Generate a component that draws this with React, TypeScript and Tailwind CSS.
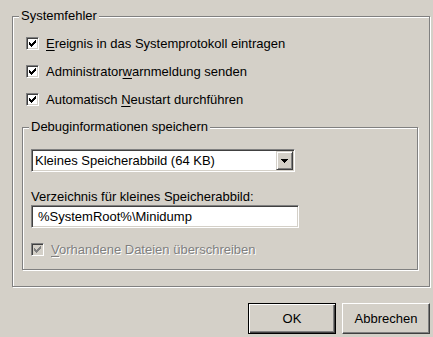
import React from "react"

const CHECK_PIXELS: [number, number][] = [
  [0, 2], [0, 3], [0, 4],
  [1, 3], [1, 4], [1, 5],
  [2, 4], [2, 5], [2, 6],
  [3, 3], [3, 4], [3, 5],
  [4, 2], [4, 3], [4, 4],
  [5, 1], [5, 2], [5, 3],
  [6, 0], [6, 1], [6, 2],
]

function CheckBox({ disabled = false }: { disabled?: boolean }) {
  return (
    <div
      className={`w-[13px] h-[13px] shrink-0 border border-t-[#808080] border-l-[#808080] border-r-white border-b-white shadow-[inset_1px_1px_0_#404040,inset_-1px_-1px_0_#d4d0c8] ${
        disabled ? "bg-[#d4d0c8]" : "bg-white"
      }`}
    >
      <svg width="11" height="11" viewBox="0 0 11 11" shapeRendering="crispEdges">
        {CHECK_PIXELS.map(([x, y]) => (
          <rect key={`${x}-${y}`} x={x + 2} y={y + 2} width="1" height="1" fill={disabled ? "#808080" : "#000"} />
        ))}
      </svg>
    </div>
  )
}

function CheckRow({ children, disabled = false }: { children: React.ReactNode; disabled?: boolean }) {
  return (
    <div className="flex items-center h-[13px] gap-[7px]">
      <CheckBox disabled={disabled} />
      <span
        className={`whitespace-nowrap leading-none ${
          disabled ? "text-[#808080] [text-shadow:1px_1px_0_#fff]" : "text-black"
        }`}
      >
        {children}
      </span>
    </div>
  )
}

function GroupBox({
  title,
  className,
  children,
}: {
  title: string
  className: string
  children: React.ReactNode
}) {
  return (
    <div
      className={`relative border border-[#808080] shadow-[1px_1px_0_#fff,inset_1px_1px_0_#fff] ${className}`}
    >
      <span className="absolute left-[6px] top-[-8px] px-[2px] bg-[#d4d0c8] leading-[14px] whitespace-nowrap">
        {title}
      </span>
      {children}
    </div>
  )
}

export default function App() {
  return (
    <div
      className="w-[433px] h-[337px] bg-[#d4d0c8] overflow-hidden pt-[16px] pl-[12px] pr-[3px] text-[13px] text-black"
      style={{ fontFamily: '"Liberation Sans", Arial, sans-serif' }}
    >
      <GroupBox title="Systemfehler" className="w-[418px] h-[271px] pl-[9px] pt-[20px]">
        <div className="flex flex-col gap-[15px] pl-[4px]">
          <CheckRow>
            <span className="underline underline-offset-2">E</span>reignis in das Systemprotokoll eintragen
          </CheckRow>
          <CheckRow>
            Administrator<span className="underline underline-offset-2">w</span>arnmeldung senden
          </CheckRow>
          <CheckRow>
            Automatisch <span className="underline underline-offset-2">N</span>eustart durchführen
          </CheckRow>
        </div>

        <GroupBox
          title="Debuginformationen speichern"
          className="mt-[21px] w-[396px] h-[143px] pl-[8px] pt-[21px]"
        >
          {/* combo box */}
          <div className="w-[264px] h-[23px] flex items-stretch border border-t-[#808080] border-l-[#808080] border-r-white border-b-white shadow-[inset_1px_1px_0_#404040,inset_-1px_-1px_0_#d4d0c8] bg-white p-[1px]">
            <div className="flex-1 flex items-center pl-[2px] whitespace-nowrap">
              Kleines Speicherabbild (64 KB)
            </div>
            <div className="w-[17px] flex items-center justify-center bg-[#d4d0c8] border border-t-[#d4d0c8] border-l-[#d4d0c8] border-r-[#404040] border-b-[#404040] shadow-[inset_1px_1px_0_#fff,inset_-1px_-1px_0_#808080]">
              <svg width="7" height="4" viewBox="0 0 7 4" shapeRendering="crispEdges">
                <rect x="0" y="0" width="7" height="1" fill="#000" />
                <rect x="1" y="1" width="5" height="1" fill="#000" />
                <rect x="2" y="2" width="3" height="1" fill="#000" />
                <rect x="3" y="3" width="1" height="1" fill="#000" />
              </svg>
            </div>
          </div>

          <div className="mt-[17px] h-[16px] leading-[16px] whitespace-nowrap">
            Verzeichnis für kleines Speicherabbild:
          </div>

          <div className="w-[268px] h-[23px] flex items-center border border-t-[#808080] border-l-[#808080] border-r-white border-b-white shadow-[inset_1px_1px_0_#404040,inset_-1px_-1px_0_#d4d0c8] bg-white pl-[6px] whitespace-nowrap">
            %SystemRoot%\Minidump
          </div>

          <div className="mt-[15px]">
            <CheckRow disabled>
              <span className="underline underline-offset-2">V</span>orhandene Dateien überschreiben
            </CheckRow>
          </div>
        </GroupBox>
      </GroupBox>

      <div className="mt-[16px] flex justify-end gap-[6px]">
        <button className="w-[88px] h-[31px] bg-[#d4d0c8] border border-black shadow-[inset_1px_1px_0_#fff,inset_-1px_-1px_0_#404040,inset_-2px_-2px_0_#808080] text-black">
          OK
        </button>
        <button className="w-[88px] h-[31px] bg-[#d4d0c8] border border-t-white border-l-white border-r-[#404040] border-b-[#404040] shadow-[inset_-1px_-1px_0_#808080] text-black">
          Abbrechen
        </button>
      </div>
    </div>
  )
}
